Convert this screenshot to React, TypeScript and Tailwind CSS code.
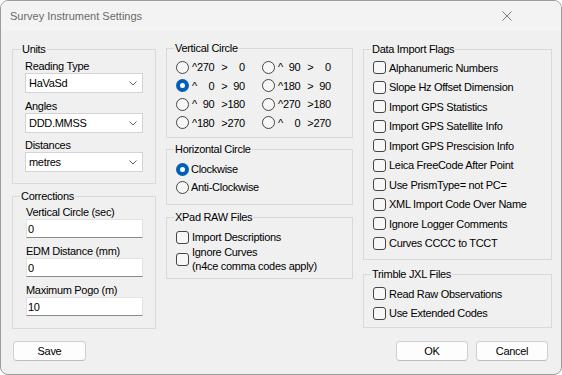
import React from 'react'

const fig = '\u2007'
const pad = (n: string) => fig.repeat(3 - n.length) + n

const verticalOptions: { from: string; to: string; checked?: boolean }[] = [
  { from: '270', to: '0' },
  { from: '90', to: '0' },
  { from: '0', to: '90', checked: true },
  { from: '180', to: '90' },
  { from: '90', to: '180' },
  { from: '270', to: '180' },
  { from: '180', to: '270' },
  { from: '0', to: '270' },
]

const importFlags = [
  'Alphanumeric Numbers',
  'Slope Hz Offset Dimension',
  'Import GPS Statistics',
  'Import GPS Satellite Info',
  'Import GPS Prescision Info',
  'Leica FreeCode After Point',
  'Use PrismType= not PC=',
  'XML Import Code Over Name',
  'Ignore Logger Comments',
  'Curves CCCC to TCCT',
]

function Radio({ checked }: { checked?: boolean }) {
  return checked ? (
    <span className="flex h-[13px] w-[13px] shrink-0 items-center justify-center rounded-full bg-[#005fb8]">
      <span className="h-[5px] w-[5px] rounded-full bg-white" />
    </span>
  ) : (
    <span className="h-[13px] w-[13px] shrink-0 rounded-full border border-[#454545] bg-[#f7f7f7]" />
  )
}

function Check() {
  return <span className="h-[13px] w-[13px] shrink-0 rounded-[3px] border border-[#454545] bg-[#f7f7f7]" />
}

function GroupBox({
  title,
  className = '',
  legendClass = 'ml-[7px]',
  children,
}: {
  title: string
  className?: string
  legendClass?: string
  children: React.ReactNode
}) {
  return (
    <fieldset className={`border border-[#d9d9d9] ${className}`}>
      <legend className={`px-[1px] leading-[14px] ${legendClass}`}>{title}</legend>
      {children}
    </fieldset>
  )
}

function Combo({ value }: { value: string }) {
  return (
    <div className="flex h-[20px] w-[118px] items-center justify-between border border-[#d3d3d3] bg-white pl-[3px] pr-[5px]">
      <span>{value}</span>
      <svg width="8" height="5" viewBox="0 0 8 5">
        <path d="M0.5 0.5 L4 4 L7.5 0.5" fill="none" stroke="#606060" />
      </svg>
    </div>
  )
}

function TextBox({ value }: { value: string }) {
  return (
    <input
      readOnly
      value={value}
      className="h-[19px] w-[117px] border border-[#e2e2e2] border-b-[#8a8a8a] bg-white pl-[1px] outline-none"
    />
  )
}

function Button({ label, width }: { label: string; width: string }) {
  return (
    <button className={`h-[20px] ${width} rounded-[4px] border border-[#d0d0d0] border-b-[#bdbdbd] bg-[#fdfdfd]`}>
      {label}
    </button>
  )
}

export default function App() {
  return (
    <div className="h-[375px] w-[562px] bg-white">
      <div className="flex h-full w-full flex-col overflow-hidden rounded-[8px] border border-[#9c9c9c] bg-[#f0f0f0] font-['Liberation_Sans',Arial,sans-serif] text-[11px] leading-[14px] tracking-[-0.3px] text-black">
        <div className="flex h-[30px] shrink-0 items-center justify-between bg-[#f3f3f3] pl-[9px] pr-[49px]">
          <span className="text-[11px] tracking-normal text-[#6a6a6a]">Survey Instrument Settings</span>
          <svg width="10" height="10" viewBox="0 0 10 10">
            <path d="M0.5 0.5 L9.5 9.5 M9.5 0.5 L0.5 9.5" stroke="#7a7a7a" strokeWidth="1" />
          </svg>
        </div>

        <div className="flex items-start gap-[10px] pl-[11px] pt-[11px]">
          <div className="flex w-[144px] flex-col">
            <GroupBox title="Units" legendClass="ml-[8px]">
              <div className="flex flex-col pb-[11px] pl-[12px] pt-[3px]">
                <span>Reading Type</span>
                <Combo value="HaVaSd" />
                <span className="mt-[6px]">Angles</span>
                <Combo value="DDD.MMSS" />
                <span className="mt-[5px]">Distances</span>
                <Combo value="metres" />
              </div>
            </GroupBox>
            <GroupBox title="Corrections" legendClass="ml-[7px]" className="mt-[5px]">
              <div className="flex flex-col pb-[12px] pl-[13px] pt-[2px]">
                <span>Vertical Circle (sec)</span>
                <TextBox value="0" />
                <span className="mt-[6px]">EDM Distance (mm)</span>
                <TextBox value="0" />
                <span className="mt-[6px]">Maximum Pogo (m)</span>
                <TextBox value="10" />
              </div>
            </GroupBox>
          </div>

          <div className="-mt-px flex w-[187px] flex-col">
            <GroupBox title="Vertical Circle">
              <div className="grid grid-cols-[86px_1fr] pb-[5px] pl-[9px] pt-[3px]">
                {verticalOptions.map((o) => (
                  <div key={o.from + o.to} className="flex h-[18.5px] items-center gap-[3px]">
                    <Radio checked={o.checked} />
                    <span className="whitespace-pre">
                      ^{pad(o.from)}
                      <span className="ml-[7px]">&gt;{pad(o.to)}</span>
                    </span>
                  </div>
                ))}
              </div>
            </GroupBox>
            <GroupBox title="Horizontal Circle" className="mt-[4px]">
              <div className="flex flex-col pb-[8px] pl-[9px] pt-[4px]">
                <div className="flex h-[18px] items-center gap-[2px]">
                  <Radio checked />
                  <span>Clockwise</span>
                </div>
                <div className="flex h-[18px] items-center gap-[2px]">
                  <Radio />
                  <span>Anti-Clockwise</span>
                </div>
              </div>
            </GroupBox>
            <GroupBox title="XPad RAW Files" className="mt-[5px]">
              <div className="flex flex-col pb-[5px] pl-[9px] pt-[6px]">
                <div className="flex items-center gap-[3px]">
                  <Check />
                  <span>Import Descriptions</span>
                </div>
                <div className="mt-px flex items-center gap-[3px]">
                  <Check />
                  <span className="flex flex-col">
                    <span>Ignore Curves</span>
                    <span>(n4ce comma codes apply)</span>
                  </span>
                </div>
              </div>
            </GroupBox>
          </div>

          <div className="flex w-[189px] flex-col">
            <GroupBox title="Data Import Flags">
              <div className="flex flex-col pb-[6px] pl-[9px] pt-[2px]">
                {importFlags.map((f) => (
                  <div key={f} className="flex h-[19.5px] items-center gap-[3px]">
                    <Check />
                    <span>{f}</span>
                  </div>
                ))}
              </div>
            </GroupBox>
            <GroupBox title="Trimble JXL Files" className="mt-[7px]">
              <div className="flex flex-col pb-[4px] pl-[9px] pt-[3px]">
                {['Read Raw Observations', 'Use Extended Codes'].map((f) => (
                  <div key={f} className="flex h-[19.5px] items-center gap-[3px]">
                    <Check />
                    <span>{f}</span>
                  </div>
                ))}
              </div>
            </GroupBox>
          </div>
        </div>

        <div className="mt-[12px] flex items-center justify-between pl-[12px] pr-[13px]">
          <Button label="Save" width="w-[73px]" />
          <div className="flex gap-[8px]">
            <Button label="OK" width="w-[72px]" />
            <Button label="Cancel" width="w-[72px]" />
          </div>
        </div>
      </div>
    </div>
  )
}
